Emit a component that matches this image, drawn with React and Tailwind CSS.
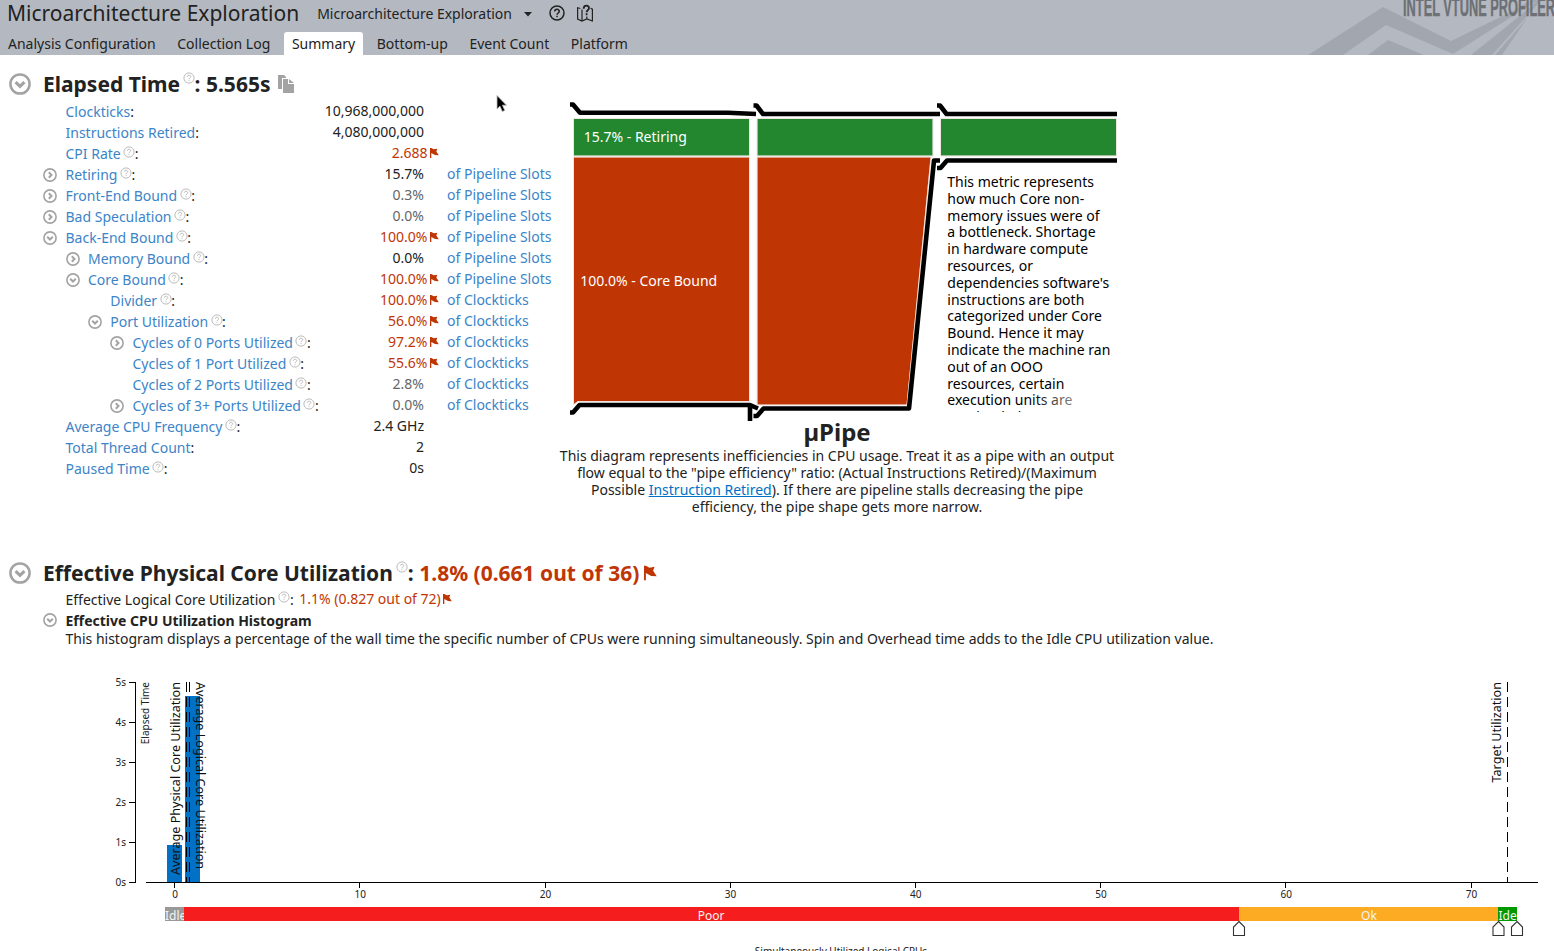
import React from 'react';

const LINK = 'text-[#3c84c8]';

const metrics = [
  { name: 'Clockticks', level: 0, value: '10,968,000,000' },
  { name: 'Instructions Retired', level: 0, value: '4,080,000,000' },
  { name: 'CPI Rate', level: 0, help: true, value: '2.688', flag: true },
  { name: 'Retiring', level: 0, toggle: 'right', help: true, value: '15.7%', unit: 'of Pipeline Slots' },
  { name: 'Front-End Bound', level: 0, toggle: 'right', help: true, value: '0.3%', dim: true, unit: 'of Pipeline Slots' },
  { name: 'Bad Speculation', level: 0, toggle: 'right', help: true, value: '0.0%', dim: true, unit: 'of Pipeline Slots' },
  { name: 'Back-End Bound', level: 0, toggle: 'down', help: true, value: '100.0%', flag: true, unit: 'of Pipeline Slots' },
  { name: 'Memory Bound', level: 1, toggle: 'right', help: true, value: '0.0%', unit: 'of Pipeline Slots' },
  { name: 'Core Bound', level: 1, toggle: 'down', help: true, value: '100.0%', flag: true, unit: 'of Pipeline Slots' },
  { name: 'Divider', level: 2, help: true, value: '100.0%', flag: true, unit: 'of Clockticks' },
  { name: 'Port Utilization', level: 2, toggle: 'down', help: true, value: '56.0%', flag: true, unit: 'of Clockticks' },
  { name: 'Cycles of 0 Ports Utilized', level: 3, toggle: 'right', help: true, value: '97.2%', flag: true, unit: 'of Clockticks' },
  { name: 'Cycles of 1 Port Utilized', level: 3, help: true, value: '55.6%', flag: true, unit: 'of Clockticks' },
  { name: 'Cycles of 2 Ports Utilized', level: 3, help: true, value: '2.8%', dim: true, unit: 'of Clockticks' },
  { name: 'Cycles of 3+ Ports Utilized', level: 3, toggle: 'right', help: true, value: '0.0%', dim: true, unit: 'of Clockticks' },
  { name: 'Average CPU Frequency', level: 0, help: true, value: '2.4 GHz' },
  { name: 'Total Thread Count', level: 0, value: '2' },
  { name: 'Paused Time', level: 0, help: true, value: '0s' },
];

const indents = ['pl-[43px]', 'pl-[65.500px]', 'pl-[87.800px]', 'pl-[110px]'];

function Toggle({ dir, className }) {
  return (
    <svg viewBox="0 0 14 14" fill="none" stroke="#a3a3a3" strokeWidth="1.6" className={className}>
      <circle cx="7" cy="7" r="6.1" />
      <path d={dir === 'down' ? 'M4.2 5.8 7 8.500 9.800 5.8' : 'M5.8 4.2 8.500 7 5.8 9.800'} strokeWidth="2" />
    </svg>
  );
}

function Help({ className }) {
  return (
    <svg viewBox="0 0 12 12" fill="none" stroke="#b3b3b3" strokeWidth="0.9" className={className}>
      <circle cx="6" cy="6" r="5.1" />
      <path d="M4.3 4.8C4.3 2.7 7.7 2.7 7.7 4.7 7.7 5.9 6 5.8 6 7.3M6 8.2V9.2" />
    </svg>
  );
}

function Flag({ className }) {
  return (
    <svg viewBox="0 0 9 10" fill="#bf3604" className={className}>
      <path d="M0 0H1.3L3.8 1.300 7.300 .7 6.300 3.5 8.800 7.300 5 7 1.3 5V10H0Z" />
    </svg>
  );
}

function MetricRow({ m }) {
  return (
    <div className="flex h-[21px] items-center">
      <div className={`flex w-[324px] shrink-0 items-center ${indents[m.level]}`}>
        <div className="w-[22.5px] shrink-0">
          {m.toggle && <Toggle dir={m.toggle} className="size-[14px]" />}
        </div>
        <span className={`whitespace-nowrap ${LINK}`}>{m.name}</span>
        {m.help && <Help className="mb-[4px] ml-[2.500px] size-[12px] shrink-0" />}
        <span className={m.help ? '-ml-[0.500px]' : ''}>:</span>
      </div>
      <div className="flex w-[123px] shrink-0 items-center pb-[2px]">
        <span
          className={`text-right ${m.flag ? 'w-[103.500px] text-[#bf3604]' : m.dim ? 'w-[100px] text-[#666]' : 'w-[100px]'}`}
        >
          {m.value}
        </span>
        {m.flag && <Flag className="ml-[2.500px] h-[10px] w-[9px]" />}
      </div>
      <span className={`whitespace-nowrap pb-[2px] ${LINK}`}>{m.unit}</span>
    </div>
  );
}

function Header() {
  const tabs = ['Analysis Configuration', 'Collection Log', 'Summary', 'Bottom-up', 'Event Count', 'Platform'];
  return (
    <header className="flex h-[55px] justify-between overflow-hidden bg-[#b4b9c1]">
      <div className="flex flex-col">
        <div className="flex h-[32px] items-start pl-[7px]">
          <h1 className="whitespace-nowrap text-[21px] leading-[27px]">Microarchitecture Exploration</h1>
          <span className="ml-[18px] whitespace-nowrap leading-[27px]">Microarchitecture Exploration</span>
          <svg viewBox="0 0 8 5" className="ml-[12px] mt-[12px] h-[5px] w-[8px]" fill="#222">
            <path d="M0 0H8L4 4.6Z" />
          </svg>
          <svg viewBox="0 0 16 16" className="ml-[17px] mt-[5px] size-[16px]" fill="none" stroke="#222" strokeWidth="1.5">
            <circle cx="8" cy="8" r="7" />
            <path d="M5.7 6.5C5.7 3.6 10.3 3.6 10.3 6.3 10.3 8 8 8 8 9.8M8 10.8V12.2" />
          </svg>
          <svg viewBox="0 0 18 18" className="ml-[11px] mt-[4px] size-[18px]" fill="none" stroke="#222" strokeWidth="1.2">
            <path d="M4.3 4.5 1.6 3.700V15L6 17 10.8 15 16.4 17V5.2L14.6 4.2M6 5.5V17M10.8 12.5V15" />
            <path d="M7.7 4.800C7.7.8 13 .8 13 4.1 13 6.3 10.6 6.2 10.6 8.2M10.6 9.3V11.2" strokeWidth="1.8" />
          </svg>
        </div>
        <nav className="flex h-[23px]">
          {tabs.map((t) => (
            <span
              key={t}
              className={`mr-[5.600px] whitespace-nowrap px-[8px] leading-[24px] ${t === 'Summary' ? 'rounded-t-[3px] bg-white' : ''}`}
            >
              {t}
            </span>
          ))}
        </nav>
      </div>
      <svg viewBox="0 0 254 55" className="h-[55px] w-[254px] shrink-0">
        <g fill="#a2a7af">
          <path d="M8 55 83 7 151 41 215 10 254-15V-10L153 54 86 25 43 55Z" />
          <path d="M68 55 88 40 124 55Z" />
          <path d="M171 55 222 14 254-14 192 55Z" />
          <path d="M195 55 228 17 202 55Z" />
        </g>
        <text
          x="103"
          y="16"
          textLength="152"
          lengthAdjust="spacingAndGlyphs"
          fill="#6d7075"
          stroke="#6d7075"
          strokeWidth="0.4"
          className="font-['Liberation_Sans_Narrow','Liberation_Sans',sans-serif] text-[25px] font-bold"
        >
          INTEL VTUNE PROFILER
        </text>
      </svg>
    </header>
  );
}

function PipeDiagram() {
  return (
    <div className="relative h-[320px] w-[560px]">
      <svg viewBox="560 95 560 320" className="h-[320px] w-[560px] overflow-visible">
        <g fill="#22872f">
          <path d="M574 119H749V155.500H574ZM757.500 119H932.500V155.500H757.500ZM941 119H1116V155.500H941Z" />
        </g>
        <path d="M574 157.500H749V401H578L574 404ZM757.500 157.500H930.500L906.500 404.500H757.500Z" fill="#bf3604" />
        <path
          d="M573.500 118.500H749.500V156H573.500ZM757 118.500H933V156H757ZM940.500 118.500H1116.500V156H940.500ZM573.500 157H749.500V401.500H578L573.500 404.500ZM757 157H931L907 405H757Z"
          fill="none"
          stroke="#d8c4b8"
          strokeOpacity="0.6"
          strokeWidth="0.7"
        />
        <g fill="none" stroke="#000" strokeWidth="4.6" strokeLinejoin="round">
          <path d="M570 104.500H573L580 112.800H728L756 114" />
          <path d="M753.500 105.500H756.500L763 114H940" />
          <path d="M937 105.500H940L946.500 114H1117" />
          <path d="M570 412.500H573L579.500 405H750L758 408.500M750 405V421" />
          <path d="M753.500 416H757L763.500 408.500H909L934 160.500H940" />
          <path d="M937 168H940.500L947 160.500H1117" />
        </g>
        <g fill="#fff">
          <text x="583.700" y="142">15.7% - Retiring</text>
          <text x="580.200" y="286">100.0% - Core Bound</text>
        </g>
      </svg>
      <div className="absolute left-[387.300px] top-[79px] h-[238px] w-[163.500px] overflow-hidden leading-[16.800px] text-black">
        This metric represents how much Core non-memory issues were of a bottleneck. Shortage in hardware compute
        resources, or dependencies software's instructions are both categorized under Core Bound. Hence it may
        indicate the machine ran out of an OOO resources, certain execution units are overloaded or
        <div className="absolute bottom-[3px] right-0 h-[17px] w-[80px] bg-gradient-to-r from-white/0 to-white" />
      </div>
    </div>
  );
}

const x0 = 174.7;
const step = 18.52;
const px = (v) => x0 + v * step;

function Marker({ x }) {
  return <path d={`M${x} 921.500 L${x + 5.5} 927V935.500H${x - 5.5}V927Z`} fill="#fff" stroke="#333" strokeWidth="1.1" />;
}

function Histogram() {
  return (
    <svg viewBox="0 660 1554 291" className="h-[291px] w-[1554px] shrink-0">
      <g fill="#0071c5">
        <rect x="167" y="845" width="15" height="37" />
        <rect x="185" y="696" width="15" height="186" />
      </g>
      <g stroke="#000" strokeWidth="1" fill="none" shapeRendering="crispEdges">
        <path d="M129 682.500H135.500V882.500H129M129 722.500H135M129 762.500H135M129 802.500H135M129 842.500H135" />
        <path d="M146 882.500H1538" />
        {[0, 10, 20, 30, 40, 50, 60, 70].map((v) => (
          <path key={v} d={`M${px(v)} 882V888`} />
        ))}
        <path d="M186.500 682V882M189.500 682V882M1507.500 682V882" strokeDasharray="10 5" />
      </g>
      <g className="text-[10px]" fill="#222">
        {[0, 1, 2, 3, 4, 5].map((v) => (
          <text key={v} x="126" y={886 - v * 40} textAnchor="end">{v}s</text>
        ))}
        {[0, 10, 20, 30, 40, 50, 60, 70].map((v) => (
          <text key={v} x={px(v) + 0.3} y="898" textAnchor="middle">{v}</text>
        ))}
        <text transform="translate(149 682) rotate(-90)" textAnchor="end">Elapsed Time</text>
        <text x="841" y="954.500" textAnchor="middle">Simultaneously Utilized Logical CPUs</text>
      </g>
      <g className="text-[12.600px]" fill="#111">
        <text transform="translate(180 682) rotate(-90)" textAnchor="end">Average Physical Core Utilization</text>
        <text transform="translate(196 682) rotate(90)">Average Logical Core Utilization</text>
        <text transform="translate(1501 682) rotate(-90)" textAnchor="end">Target Utilization</text>
      </g>
      <g shapeRendering="crispEdges">
        <rect x="165" y="907" width="19" height="14" fill="#999" />
        <rect x="184" y="907" width="1055" height="14" fill="#f51d1d" />
        <rect x="1239" y="907" width="259" height="14" fill="#fcab23" />
        <rect x="1498" y="907" width="19" height="14" fill="#009a00" />
      </g>
      <clipPath id="idle"><rect x="165" y="907" width="19" height="14" /></clipPath>
      <clipPath id="ideal"><rect x="1498" y="907" width="19" height="14" /></clipPath>
      <g className="text-[12px]" fill="#f4f4f4">
        <text x="165" y="920" clipPath="url(#idle)">Idle</text>
        <text x="711" y="920" textAnchor="middle">Poor</text>
        <text x="1369" y="920" textAnchor="middle">Ok</text>
        <text x="1498.500" y="920" clipPath="url(#ideal)">Ideal</text>
      </g>
      <Marker x={1239} />
      <Marker x={1498.5} />
      <Marker x={1517} />
    </svg>
  );
}

export default function App() {
  return (
    <div className="relative flex h-[951px] w-[1554px] flex-col overflow-hidden bg-white font-['Noto_Sans',sans-serif] text-[14px] leading-[21px] text-[#222]">
      <Header />
      <main className="flex flex-col">
        <div className="flex h-[496px]">
          <section className="flex w-[560px] shrink-0 flex-col pt-[14px]">
            <div className="flex h-[30px] items-center pl-[9px]">
              <Toggle dir="down" className="size-[22px]" />
              <h2 className="ml-[12px] whitespace-nowrap text-[21px] font-bold">Elapsed Time</h2>
              <Help className="mb-[12px] ml-[2.500px] size-[12px]" />
              <span className="whitespace-nowrap text-[21px] font-bold">: 5.565s</span>
              <svg viewBox="0 0 16 18" className="ml-[7px] size-[18px]" fill="#a3a3a3">
                <path d="M0 0H6L8 2V3H4V14H0ZM5 4H10V9H16V18H5ZM11 4 16 8H11Z" />
              </svg>
            </div>
            <div className="flex flex-col pt-[2px]">
              {metrics.map((m) => <MetricRow key={m.name} m={m} />)}
            </div>
          </section>
          <section className="flex w-[560px] shrink-0 flex-col pt-[40px]">
            <PipeDiagram />
            <div className="flex w-[554px] flex-col items-center">
              <h2 className="h-[32px] text-[24px] font-bold leading-[34px]">µPipe</h2>
              <p className="w-[560px] text-center leading-[17px]">
                This diagram represents inefficiencies in CPU usage. Treat it as a pipe with an output
                <br />
                flow equal to the "pipe efficiency" ratio: (Actual Instructions Retired)/(Maximum
                <br />
                Possible <a className="text-[#0071c5] underline">Instruction Retired</a>). If there are pipeline
                stalls decreasing the pipe
                <br />
                efficiency, the pipe shape gets more narrow.
              </p>
            </div>
          </section>
        </div>
        <section className="flex h-[109px] flex-col pt-[7px]">
          <div className="flex h-[30px] items-center pl-[9px]">
            <Toggle dir="down" className="size-[22px]" />
            <h2 className="ml-[12px] whitespace-nowrap text-[21px] font-bold">Effective Physical Core Utilization</h2>
            <Help className="mb-[12px] ml-[3px] size-[12px]" />
            <span className="whitespace-nowrap text-[21px] font-bold">
              : <span className="text-[#bf3604]">1.8% (0.661 out of 36)</span>
            </span>
            <Flag className="ml-[5px] h-[16px] w-[13px]" />
          </div>
          <div className="flex h-[22px] items-center pl-[65.500px]">
            <span>Effective Logical Core Utilization</span>
            <Help className="mb-[4px] ml-[3px] size-[12px]" />
            <span className="-ml-[0.500px]">:</span>
            <span className="ml-[5.500px] pb-[1px] text-[#bf3604]">1.1% (0.827 out of 72)</span>
            <Flag className="ml-[2px] h-[10px] w-[9px]" />
          </div>
          <div className="flex h-[20px] items-center pl-[43px]">
            <Toggle dir="down" className="size-[14px]" />
            <h3 className="ml-[8.500px] font-bold">Effective CPU Utilization Histogram</h3>
          </div>
          <p className="pl-[65.500px] leading-[17px]">
            This histogram displays a percentage of the wall time the specific number of CPUs were running
            simultaneously. Spin and Overhead time adds to the Idle CPU utilization value.
          </p>
        </section>
        <Histogram />
      </main>
      <svg viewBox="0 0 12 18" className="absolute left-[496px] top-[94px] h-[19px] w-[12px]">
        <path d="M1 1V14.500L4 11.700 6.300 17 8.800 15.900 6.400 10.700H10.500Z" fill="#000" stroke="#bbb" strokeWidth="0.8" />
      </svg>
    </div>
  );
}
